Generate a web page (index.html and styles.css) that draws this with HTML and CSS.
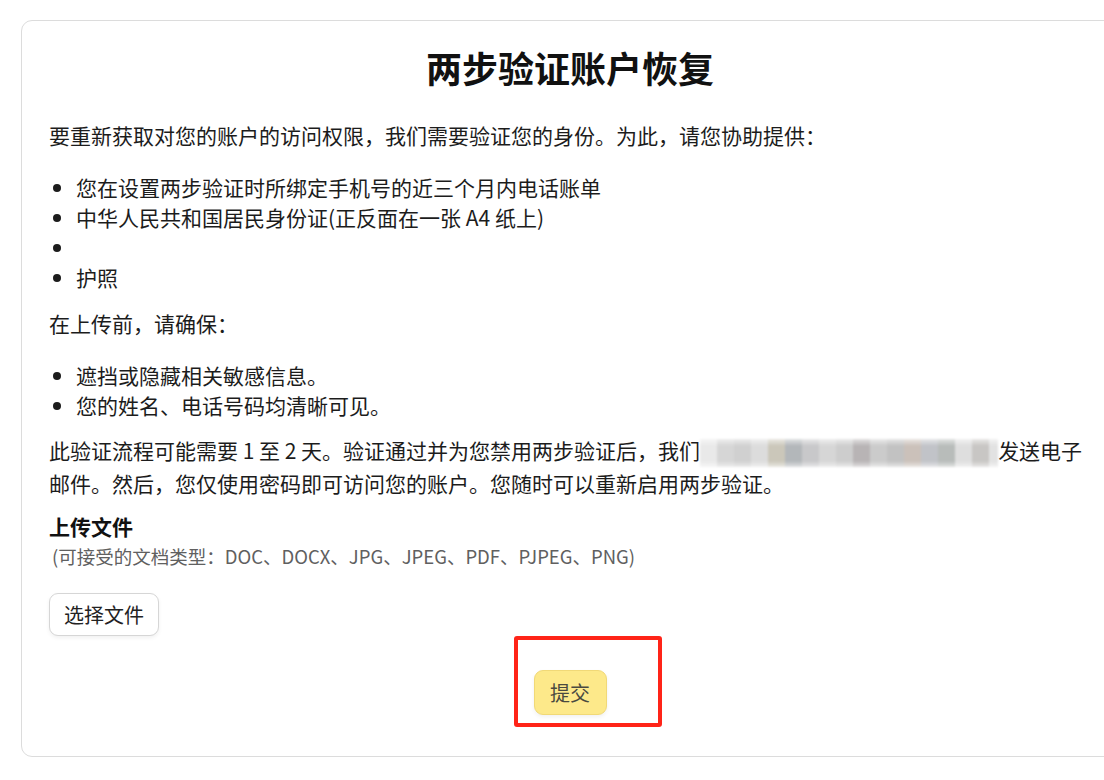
FILE: index.html
```html
<!DOCTYPE html>
<html lang="zh-CN">
<head>
<meta charset="utf-8">
<title>两步验证账户恢复</title>
<link rel="stylesheet" href="styles.css">
</head>
<body>
<main class="card">
  <h1 class="title">两步验证账户恢复</h1>
  <p class="intro">要重新获取对您的账户的访问权限，我们需要验证您的身份。为此，请您协助提供：</p>
  <ul class="list list-docs">
    <li>您在设置两步验证时所绑定手机号的近三个月内电话账单</li>
    <li>中华人民共和国居民身份证(正反面在一张 A4 纸上)</li>
    <li></li>
    <li>护照</li>
  </ul>
  <p class="before">在上传前，请确保：</p>
  <ul class="list list-checks">
    <li>遮挡或隐藏相关敏感信息。</li>
    <li>您的姓名、电话号码均清晰可见。</li>
  </ul>
  <p class="notice"><span class="seg">此验证流程可能需要 1 至 2 天。验证通过并为您禁用两步验证后，我们</span><span class="mosaic" aria-hidden="true"></span><span class="seg">发送电子</span><span class="seg">邮件。然后，您仅使用密码即可访问您的账户。您随时可以重新启用两步验证。</span></p>
  <h2 class="upload-title">上传文件</h2>
  <p class="accept">(可接受的文档类型：DOC、DOCX、JPG、JPEG、PDF、PJPEG、PNG)</p>
  <div class="choose-row">
    <button class="btn btn-choose" type="button">选择文件</button>
  </div>
  <div class="submit-row">
    <button class="btn btn-submit" type="button">提交</button>
  </div>
</main>
<div class="annotation"></div>
</body>
</html>
```
FILE: styles.css
```css
html, body {
  overflow: hidden;
}
body {
  margin: 0;
  padding: 20px 0 0 21px;
  background: #ffffff;
  font-family: "Noto Sans CJK SC", "Noto Sans", sans-serif;
  color: #1c1c1c;
}
.card {
  box-sizing: border-box;
  width: 1098px;
  height: 737px;
  border: 1px solid #dcdcdc;
  border-radius: 11px;
  padding: 22px 27px 0 27px;
  display: flex;
  flex-direction: column;
}
.title {
  margin: 0;
  font-size: 36px;
  line-height: 48px;
  font-weight: 700;
  text-align: center;
  color: #111;
}
.intro {
  margin: 29px 0 0;
  font-size: 21px;
  line-height: 30px;
}
.list {
  margin: 22px 0 0;
  padding-left: 27px;
  font-size: 21px;
  line-height: 30px;
}
.list li {
  min-height: 30px;
}
.before {
  margin: 16px 0 0;
  font-size: 21px;
  line-height: 30px;
}
.list-checks {
  margin-top: 22px;
}
.notice {
  margin: 14px 0 0;
  font-size: 21px;
  line-height: 32px;
}
.mosaic {
  display: inline-block;
  vertical-align: middle;
  width: 298px;
  height: 28px;
  background:
    linear-gradient(to bottom, rgba(255,255,255,0.6) 0, rgba(255,255,255,0) 25%, rgba(255,255,255,0) 78%, rgba(255,255,255,0.6) 100%),
    linear-gradient(to right,
      #e9e9e9 0 17px, #d6d6d6 17px 34px, #d0d0d0 34px 51px, #dcdcdc 51px 68px,
      #cbc7ba 68px 85px, #b3b7ba 85px 102px, #c8c8ca 102px 119px, #d6d6d6 119px 136px,
      #cdcdcd 136px 153px, #b8b4b5 153px 170px, #cbcbcb 170px 187px, #c2c2c2 187px 204px,
      #cbc1ba 204px 221px, #c1c3c8 221px 238px, #b8bcba 238px 255px, #dedede 255px 272px,
      #c8c6c4 272px 289px, #e2e2e2 289px 298px);
  filter: blur(0.8px);
}
.upload-title {
  margin: 12px 0 0;
  font-size: 21px;
  line-height: 30px;
  font-weight: 700;
  color: #111;
}
.accept {
  margin: 0;
  padding-left: 3px;
  font-size: 18.5px;
  line-height: 30px;
  color: #606060;
}
.choose-row {
  margin-top: 22px;
  display: flex;
}
.btn {
  font-family: "Noto Sans CJK SC", "Noto Sans", sans-serif;
  font-size: 20px;
  line-height: 27px;
  border-radius: 9px;
  cursor: pointer;
}
.btn-choose {
  box-sizing: border-box;
  width: 110px;
  height: 43px;
  padding: 0;
  background: #ffffff;
  border: 1px solid #d6d6d6;
  color: #222;
  box-shadow: 0 2px 4px rgba(0,0,0,0.06);
}
.submit-row {
  margin-top: 34px;
  display: flex;
  justify-content: center;
}
.btn-submit {
  box-sizing: border-box;
  width: 73px;
  height: 45px;
  padding: 0;
  background: #fde98a;
  border: 1px solid #f1d977;
  color: #4a4a40;
  box-shadow: 0 2px 4px rgba(0,0,0,0.06);
}
.annotation {
  position: absolute;
  left: 514px;
  top: 636px;
  width: 148px;
  height: 91px;
  box-sizing: border-box;
  border: 4px solid #ff2418;
  border-radius: 3px;
  pointer-events: none;
}
```
